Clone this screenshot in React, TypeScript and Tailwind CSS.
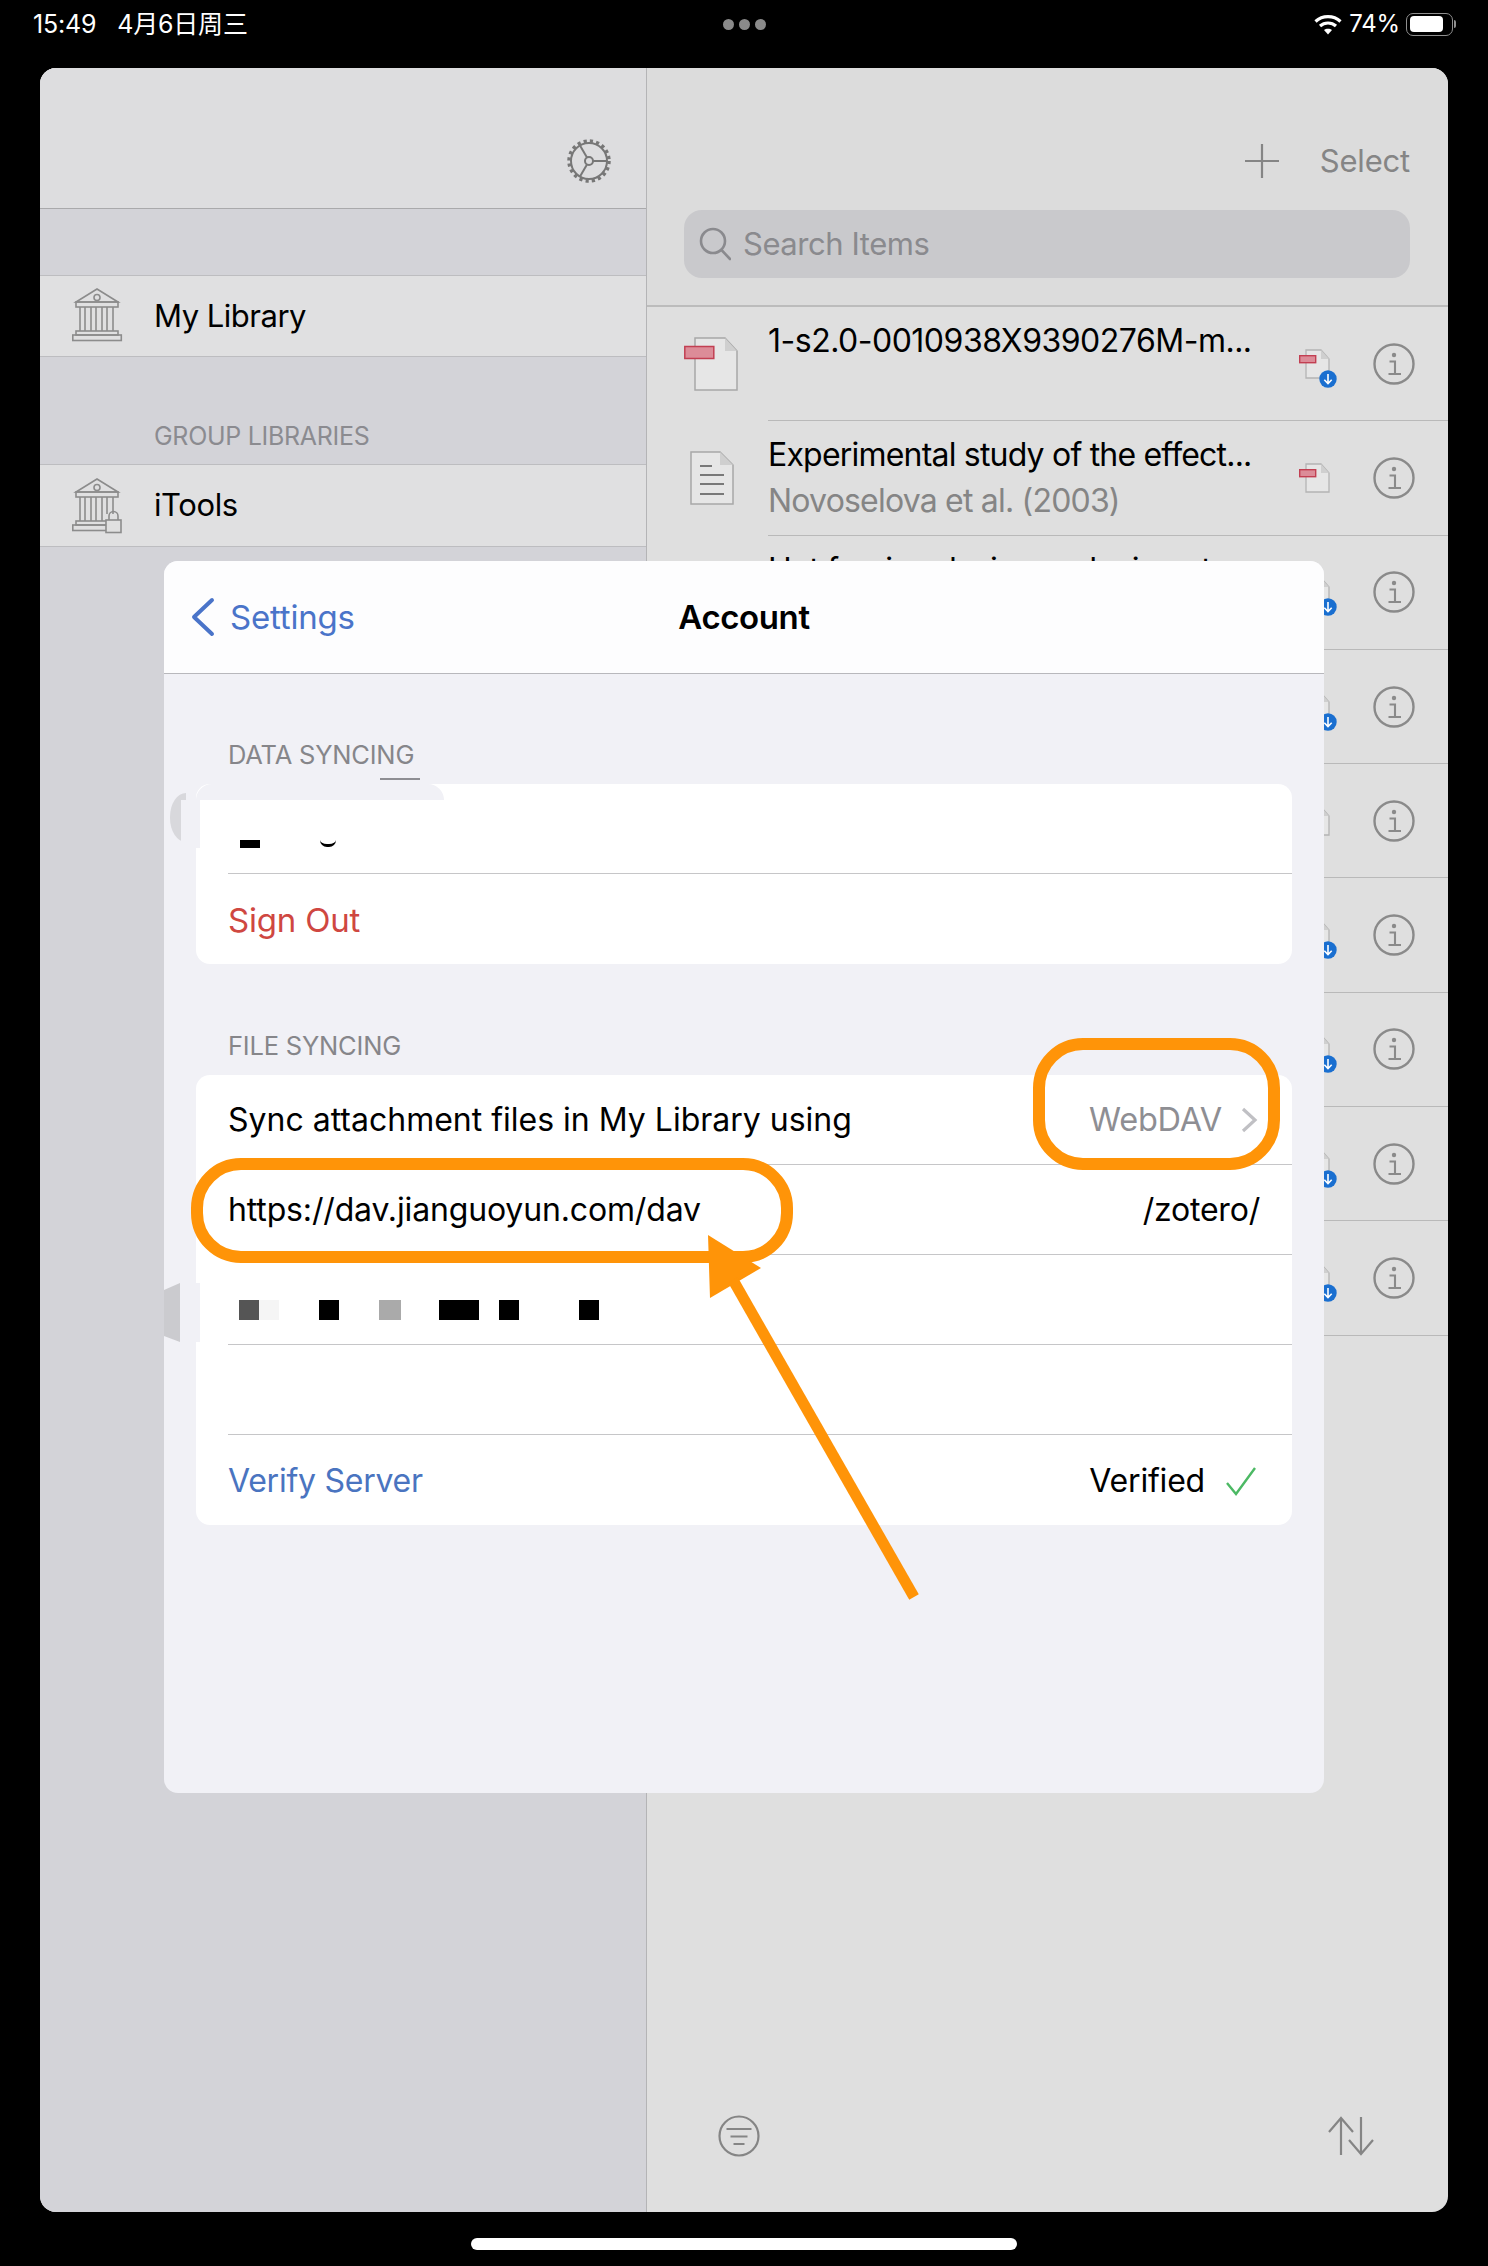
import React from "react";

const LibraryIcon = ({ locked }: { locked?: boolean }) => (
  <svg width="52" height="56" viewBox="0 0 52 56" fill="none" stroke="#8c8c8c" strokeWidth="1.6">
    <path d="M25 1 L46 14 L4 14 Z" />
    <circle cx="25" cy="9.5" r="3" />
    <rect x="4" y="14" width="42" height="5" />
    {[8, 13, 19, 24, 30, 35, 41].map((x, i) => (
      <line key={x} x1={x} x2={x} y1="19" y2={locked && i > 4 ? "36" : "43"} />
    ))}
    <rect x="4" y="43" width={locked ? 31 : 42} height="4" />
    <rect x="0.8" y="47" width={locked ? 34 : 48.5} height="5.5" />
    {locked && (
      <>
        <rect x="34" y="42" width="15" height="12.5" fill="#e0e0e0" />
        <path d="M37 42 v-4 a4.5 4.5 0 0 1 9 0 v4" />
      </>
    )}
  </svg>
);

const Gear = () => {
  const spokes = [0, 120, 240];
  return (
    <svg width="46" height="46" viewBox="-23 -23 46 46" fill="none" stroke="#777">
      <circle r="18" strokeWidth="2" />
      <circle r="20" strokeWidth="3.5" strokeDasharray="3.2 3.1" />
      <circle r="4" strokeWidth="2" />
      {spokes.map((a) => (
        <line
          key={a}
          x1={4 * Math.cos((a * Math.PI) / 180)}
          y1={4 * Math.sin((a * Math.PI) / 180)}
          x2={18 * Math.cos((a * Math.PI) / 180)}
          y2={18 * Math.sin((a * Math.PI) / 180)}
          strokeWidth="2"
        />
      ))}
    </svg>
  );
};

const PdfBig = () => (
  <svg width="54" height="54" viewBox="0 0 54 54" fill="none">
    <path d="M11 1 H41 L53 14 V53 H11 Z" fill="#e6e6e6" stroke="#a8a8a8" strokeWidth="1.5" />
    <path d="M41 1 V14 H53 Z" fill="#cfcfcf" />
    <rect x="0.8" y="9.5" width="29" height="12" fill="#dc8c98" stroke="#c23f52" strokeWidth="1.5" />
  </svg>
);

const NoteIcon = () => (
  <svg width="44" height="54" viewBox="0 0 44 54" fill="none">
    <path d="M1 1 H30 L43 14 V53 H1 Z" fill="#e6e6e6" stroke="#a8a8a8" strokeWidth="1.5" />
    <path d="M30 1 V14 H43 Z" fill="#cfcfcf" />
    <g stroke="#555" strokeWidth="1.5">
      <line x1="10" x2="22" y1="15" y2="15" />
      <line x1="10" x2="34" y1="24" y2="24" />
      <line x1="10" x2="34" y1="33" y2="33" />
      <line x1="10" x2="34" y1="43" y2="43" />
    </g>
  </svg>
);

const PdfSmall = ({ download = true, pdf = true }: { download?: boolean; pdf?: boolean }) => (
  <svg width="42" height="44" viewBox="0 0 42 44" fill="none" className="mt-[8px]">
    <path d="M9 4 H24 L32 13 V32 H9 Z" fill="#e6e6e6" stroke="#b4b4b4" strokeWidth="1.3" />
    <path d="M24 4 V13 H32 Z" fill="#cfcfcf" />
    {pdf && <rect x="2.7" y="9.7" width="16" height="7" fill="#dc8c98" stroke="#c23f52" strokeWidth="1.4" />}
    {download && (
      <>
        <circle cx="31" cy="33" r="8.7" fill="#1a6fd0" />
        <path d="M31 28 V37.5 M27.3 33.8 L31 37.5 L34.7 33.8" stroke="#fff" strokeWidth="1.6" />
      </>
    )}
  </svg>
);

const InfoIcon = () => (
  <svg width="42" height="42" viewBox="0 0 42 42" fill="none" stroke="#8a8a8a" strokeWidth="2.4">
    <circle cx="21" cy="21" r="19.5" />
    <path d="M16.5 18.5 H22 V31 M15.5 31 H28" strokeWidth="2.1" />
    <circle cx="21" cy="12" r="2.2" fill="#8a8a8a" stroke="none" />
  </svg>
);

type Item = { title?: string; sub?: string; note?: boolean; big?: boolean; dl?: boolean; track?: string };
const items: Item[] = [
  { title: "1-s2.0-0010938X9390276M-m...", big: true, dl: true, track: "tracking-[-0.5px]" },
  { title: "Experimental study of the effect...", sub: "Novoselova et al. (2003)", note: true, dl: false, track: "tracking-[-0.8px]" },
  { title: "Hot forging design and microst...", dl: true, track: "tracking-[-0.8px]" },
  { dl: true },
  { dl: false },
  { dl: true },
  { dl: true },
  { dl: true },
  { dl: true },
];

const Row = ({ item }: { item: Item }) => (
  <div className="flex h-[114.3px]">
    <div className="flex w-[121px] shrink-0 items-center justify-start pl-[37px]">
      {item.big && <PdfBig />}
      {item.note && (
        <span className="pl-[6px]">
          <NoteIcon />
        </span>
      )}
    </div>
    <div className="flex min-w-0 flex-1 items-center border-b-[1.5px] border-[#b9b9b9] pr-[33px]">
      <div className={`min-w-0 flex-1 self-start whitespace-nowrap pt-[14px] ${item.track ?? ""}`}>
        {item.title && <div className="text-[32px] leading-[40px] text-black">{item.title}</div>}
        {item.sub && <div className="mt-[6px] text-[32px] leading-[40px] text-[#858585]">{item.sub}</div>}
      </div>
      <PdfSmall download={item.dl} />
      <div className="ml-[34px]">
        <InfoIcon />
      </div>
    </div>
  </div>
);

const CardRow = ({ children, last }: { children: React.ReactNode; last?: boolean }) => (
  <div className="h-[90px] pl-[32px]">
    <div className={`flex h-full items-center justify-between pr-[32px] ${last ? "pt-[2px]" : "border-b-[1.5px] border-[#c6c6c8]"}`}>
      {children}
    </div>
  </div>
);

const Blob = ({ c, w = 20 }: { c: string; w?: number }) => (
  <span className="block h-[20px]" style={{ background: c, width: w }} />
);

export default function App() {
  return (
    <div className="relative h-[2266px] w-[1488px] overflow-hidden bg-black font-['Inter','Noto_Sans_CJK_SC',sans-serif] tracking-[-0.2px]">
      {/* status bar */}
      <div className="grid h-[68px] grid-cols-3 items-start pl-[33px] pr-[32px] pt-[12px] text-white">
        <div className="flex gap-[21px] text-[25px] leading-[24px]">
          <span>15:49</span>
          <span>4月6日周三</span>
        </div>
        <div className="flex h-[24px] items-center justify-center gap-[5px]">
          <span className="h-[11px] w-[11px] rounded-full bg-[#8a8a8a]" />
          <span className="h-[11px] w-[11px] rounded-full bg-[#8a8a8a]" />
          <span className="h-[11px] w-[11px] rounded-full bg-[#8a8a8a]" />
        </div>
        <div className="flex h-[24px] items-center justify-end">
          <svg width="28" height="21" viewBox="0 0 28 21" fill="none" stroke="#fff" strokeWidth="3.2">
            <path d="M1.5 7.5 C8.5 1 19.5 1 26.5 7.5" />
            <path d="M6 12 C10.5 8 17.5 8 22 12" />
            <path d="M14 20.5 L10 16 C12 14.3 16 14.3 18 16 Z" fill="#fff" stroke="none" />
          </svg>
          <span className="ml-[7px] text-[24px] leading-[24px]">74%</span>
          <span className="ml-[6px] flex h-[23px] w-[47px] items-center rounded-[7px] border-[1.5px] border-[#8f8f8f] p-[2.5px]">
            <span className="h-full w-[33px] rounded-[4px] bg-white" />
          </span>
          <span className="ml-[1px] h-[8px] w-[2px] rounded-r-full bg-[#8f8f8f]" />
        </div>
      </div>

      {/* window */}
      <div className="ml-[40px] flex h-[2144px] w-[1408px] overflow-hidden rounded-[16px] bg-[#dfdfdf]">
        {/* sidebar */}
        <div className="flex w-[607px] shrink-0 flex-col border-r-[1.5px] border-[#b4b4b6] bg-[#d3d3d8]">
          <div className="flex h-[141px] items-end justify-end border-b-[1.5px] border-[#a9a9ab] bg-[#dddddf] pb-[24px] pr-[34px]">
            <Gear />
          </div>
          <div className="h-[66px]" />
          <div className="flex h-[82px] items-center border-y-[1.5px] border-[#bdbdc0] bg-[#e0e0e1] pl-[32px]">
            <LibraryIcon />
            <span className="ml-[30px] text-[31px] tracking-[-0.5px] text-black">My Library</span>
          </div>
          <div className="flex h-[107px] items-end pb-[13px] pl-[114px] text-[25px] leading-[30px] tracking-[-0.3px] text-[#8b8b90]">
            GROUP LIBRARIES
          </div>
          <div className="flex h-[83px] items-center border-y-[1.5px] border-[#bdbdc0] bg-[#e0e0e1] pl-[32px]">
            <LibraryIcon locked />
            <span className="ml-[30px] text-[31px] tracking-[-0.4px] text-black">iTools</span>
          </div>
        </div>

        {/* main */}
        <div className="flex min-w-0 flex-1 flex-col">
          <div className="h-[239px] border-b-[2px] border-[#bcbcbc] bg-[#dcdcdc] pl-[37px] pr-[38px]">
            <div className="flex h-[142px] items-end justify-end pb-[29px] leading-[40px]">
              <svg width="36" height="36" viewBox="0 0 36 36" stroke="#858585" strokeWidth="2.2" className="mr-[40px] mb-[2px]">
                <path d="M18 1 V35 M1 18 H35" />
              </svg>
              <span className="text-[31px] text-[#858585]">Select</span>
            </div>
            <div className="flex h-[68px] items-center rounded-[18px] bg-[#c9c9cc] pl-[15px]">
              <svg width="32" height="34" viewBox="0 0 32 34" fill="none" stroke="#8a8a8e" strokeWidth="2.6">
                <circle cx="14" cy="14" r="12" />
                <path d="M22.5 23 L31 32" strokeLinecap="round" />
              </svg>
              <span className="ml-[12px] text-[31px] tracking-[-0.45px] text-[#8a8a8e]">Search Items</span>
            </div>
          </div>
          <div className="flex flex-col">
            {items.map((it, i) => (
              <Row key={i} item={it} />
            ))}
          </div>
          <div className="mt-auto flex items-center justify-between pb-[55px] pl-[71px] pr-[73px]">
            <svg width="42" height="42" viewBox="0 0 42 42" fill="none" stroke="#858585" strokeWidth="2.2">
              <circle cx="21" cy="21" r="19.5" />
              <path d="M8.5 14 H33.5 M12.5 21.5 H29.5 M15.5 29 H26.5" />
            </svg>
            <svg width="48" height="40" viewBox="0 0 48 40" fill="none" stroke="#858585" strokeWidth="2.2">
              <path d="M14 39 V2 M2 16 L14 2 L26 16" />
              <path d="M34 1 V38 M22 24 L34 38 L46 24" />
            </svg>
          </div>
        </div>
      </div>

      {/* home bar */}
      <div className="ml-[471px] mt-[26px] h-[12px] w-[546px] rounded-full bg-white" />

      {/* modal */}
      <div className="absolute left-[164px] top-[561px] flex h-[1232px] w-[1160px] flex-col overflow-hidden rounded-[14px] bg-[#f1f1f6]">
        <div className="relative flex h-[113px] items-center justify-center border-b-[1.5px] border-[#b8b8bc] bg-[#fdfdfe]">
          <div className="absolute left-[27px] flex items-center text-[#4a74c9]">
            <svg width="24" height="40" viewBox="0 0 24 40" fill="none" stroke="#4a74c9" strokeWidth="4" strokeLinecap="round" strokeLinejoin="round">
              <path d="M21 3 L3 20 L21 37" />
            </svg>
            <span className="ml-[15px] text-[33px] leading-[40px]">Settings</span>
          </div>
          <span className="text-[33px] font-semibold leading-[40px] tracking-[-0.4px] text-black">Account</span>
        </div>
        <div className="px-[32px]">
          <div className="flex h-[110px] items-end pb-[14px] pl-[32px] text-[25.5px] leading-[30px] text-[#86868a]">DATA SYNCING</div>
          <div className="overflow-hidden rounded-[14px] bg-white text-[32px] leading-[40px]">
            <CardRow>
              <span />
            </CardRow>
            <CardRow last>
              <span className="text-[33px] text-[#cf4741]">Sign Out</span>
            </CardRow>
          </div>
          <div className="flex h-[111px] items-end pb-[14px] pl-[32px] text-[25.5px] leading-[30px] text-[#86868a]">FILE SYNCING</div>
          <div className="overflow-hidden rounded-[14px] bg-white text-[32px] leading-[40px] text-black">
            <CardRow>
              <span className="tracking-[0px]">Sync attachment files in My Library using</span>
              <span className="flex items-center text-[#8e8e93]">
                <span className="text-[32.5px]">WebDAV</span>
                <svg width="17" height="26" viewBox="0 0 17 26" fill="none" stroke="#c0c0c4" strokeWidth="3.2" className="ml-[19px] mr-[2px]">
                  <path d="M2 2 L14 13 L2 24" />
                </svg>
              </span>
            </CardRow>
            <CardRow>
              <span className="tracking-[-0.15px]">https://dav.jianguoyun.com/dav</span>
              <span>/zotero/</span>
            </CardRow>
            <CardRow>
              <span className="mt-[20px] flex items-center pl-[11px]">
                <Blob c="#555" />
                <Blob c="#f5f5f5" />
                <span className="ml-[40px]">
                  <Blob c="#000" />
                </span>
                <span className="ml-[40px]">
                  <Blob c="#aaa" w={22} />
                </span>
                <span className="ml-[38px]">
                  <Blob c="#000" w={40} />
                </span>
                <span className="ml-[20px]">
                  <Blob c="#000" />
                </span>
                <span className="ml-[60px]">
                  <Blob c="#000" />
                </span>
              </span>
            </CardRow>
            <CardRow>
              <span />
            </CardRow>
            <CardRow last>
              <span className="tracking-[-0.25px] text-[#4a74c0]">Verify Server</span>
              <span className="flex items-center">
                Verified
                <svg width="32" height="30" viewBox="0 0 32 30" fill="none" stroke="#4cb964" strokeWidth="2.4" className="ml-[20px] mr-[3px]">
                  <path d="M2 17 L11 28 L30 2" />
                </svg>
              </span>
            </CardRow>
          </div>
        </div>
      </div>

      {/* capture artefacts over the cards */}
      <div className="absolute left-[196px] top-[784px] h-[16px] w-[248px] rounded-t-[16px] bg-[#f1f1f6]" />
      <div className="absolute left-[170px] top-[793px] h-[49px] w-[16px] rounded-[16px_0_0_16px/24px_0_0_24px] bg-[#d8d8dc]" />
      <div className="absolute left-[181px] top-[800px] h-[48px] w-[19px] bg-[#f1f1f6]" />
      <div className="absolute left-[380px] top-[778px] h-[2px] w-[40px] bg-[#8e8e93]" />
      <div className="absolute left-[240px] top-[840px] h-[8px] w-[20px] bg-black" />
      <div className="absolute left-[320px] top-[840px] h-[7px] w-[16px] rounded-b-full border-b-[3px] border-black" />
      <div className="absolute left-[164px] top-[1283px] h-[59px] w-[16px] bg-[#cbcbcf] [clip-path:polygon(0_12%,100%_0,100%_100%,0_90%)]" />
      <div className="absolute left-[180px] top-[1283px] h-[59px] w-[20px] bg-[#f1f1f6]" />

      {/* annotations */}
      <div className="absolute left-[191px] top-[1158px] h-[105px] w-[602px] rounded-[50px] border-[12px] border-[#ff9408]" />
      <div className="absolute left-[1033px] top-[1038px] h-[132px] w-[247px] rounded-[50px] border-[12px] border-[#ff9408]" />
      <svg className="absolute left-[700px] top-[1225px]" width="225" height="380" viewBox="700 1225 225 380">
        <polygon points="708,1235 710,1298 761,1268" fill="#ff9408" />
        <line x1="733" y1="1280" x2="914" y2="1597" stroke="#ff9408" strokeWidth="11" />
      </svg>
    </div>
  );
}
